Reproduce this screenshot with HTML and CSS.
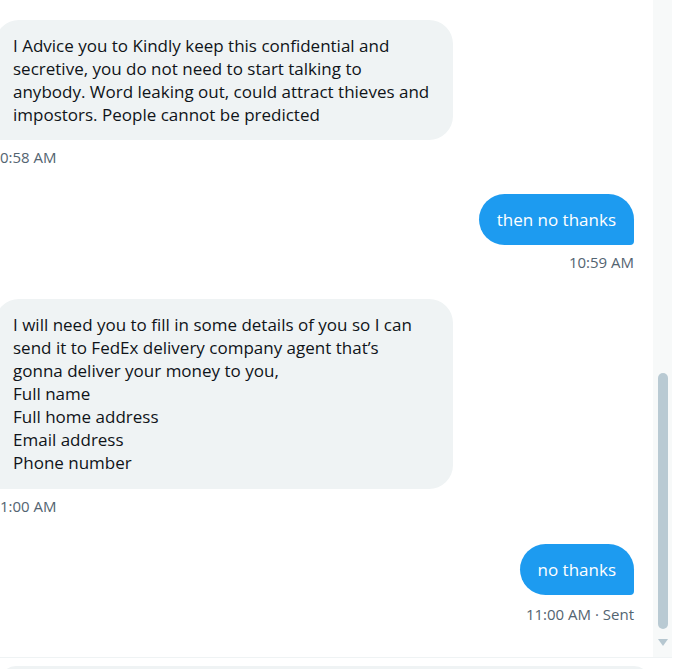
FILE: index.html
```html
<!DOCTYPE html>
<html lang="en">
<head>
<meta charset="utf-8">
<title>Messages</title>
<link rel="stylesheet" href="styles.css">
</head>
<body>
<div class="app">
  <div class="top">
    <div class="conversation">
      <div class="msg in">
        <div class="bubble">I Advice you to Kindly keep this confidential and<br>secretive, you do not need to start talking to<br>anybody. Word leaking out, could attract thieves and<br>impostors. People cannot be predicted</div>
        <div class="time">0:58 AM</div>
      </div>
      <div class="msg out">
        <div class="bubble">then no thanks</div>
        <div class="time">10:59 AM</div>
      </div>
      <div class="msg in">
        <div class="bubble tall">I will need you to fill in some details of you so I can<br>send it to FedEx delivery company agent that’s<br>gonna deliver your money to you,<br>Full name<br>Full home address<br>Email address<br>Phone number</div>
        <div class="time">1:00 AM</div>
      </div>
      <div class="msg out last">
        <div class="bubble">no thanks</div>
        <div class="time">11:00 AM · Sent</div>
      </div>
    </div>
    <div class="scrollbar">
      <div class="thumb"></div>
      <div class="arrow"></div>
    </div>
  </div>
  <div class="composer">
    <div class="input"></div>
  </div>
</div>
</body>
</html>
```
FILE: styles.css
```css
html, body {
  margin: 0;
  padding: 0;
  background: #ffffff;
}
body {
  width: 680px;
  height: 669px;
  overflow: hidden;
  font-family: "Open Sans", "Noto Sans", "Liberation Sans", sans-serif;
  color: #0f1419;
}
.app {
  width: 672px;
  height: 669px;
  overflow: hidden;
  display: flex;
  flex-direction: column;
}
.top {
  display: flex;
  height: 657px;
  flex-shrink: 0;
}
.conversation {
  flex: 1;
  display: flex;
  flex-direction: column;
  gap: 28px;
  padding: 20px 19px 0 0;
  overflow: hidden;
}
.msg {
  display: flex;
  flex-direction: column;
}
.msg.in {
  align-self: flex-start;
  margin-left: -5px;
}
.msg.out {
  align-self: flex-end;
  align-items: flex-end;
}
.msg.last {
  margin-top: 1px;
}
.bubble {
  padding: 14px 18px;
  border-radius: 24px;
  font-size: 17px;
  line-height: 23px;
  white-space: nowrap;
}
.bubble.tall {
  padding-bottom: 15px;
}
.in .bubble {
  width: 422px;
  background: #eff3f4;
  border-bottom-left-radius: 4px;
}
.out .bubble {
  background: #1d9bf0;
  color: #ffffff;
  border-radius: 26px;
  border-bottom-right-radius: 4px;
  padding: 14px 18px;
}
.time {
  margin-top: 8px;
  font-size: 15px;
  line-height: 18px;
  color: #536471;
}
.in .time {
  margin-left: 5px;
}
.last .time {
  margin-top: 10px;
}
.scrollbar {
  width: 19px;
  background: #f7f9f9;
  display: flex;
  flex-direction: column;
  align-items: center;
  padding-top: 373px;
  box-sizing: border-box;
}
.thumb {
  width: 10px;
  height: 256px;
  border-radius: 5px;
  background: #b9cad3;
}
.arrow {
  margin-top: 10px;
  width: 0;
  height: 0;
  border-left: 5px solid transparent;
  border-right: 5px solid transparent;
  border-top: 7px solid #b6c7d0;
}
.composer {
  border-top: 1px solid #eff3f4;
  padding: 8px 22px 0 0;
}
.input {
  height: 40px;
  border-radius: 16px;
  background: #eff3f4;
}
```
